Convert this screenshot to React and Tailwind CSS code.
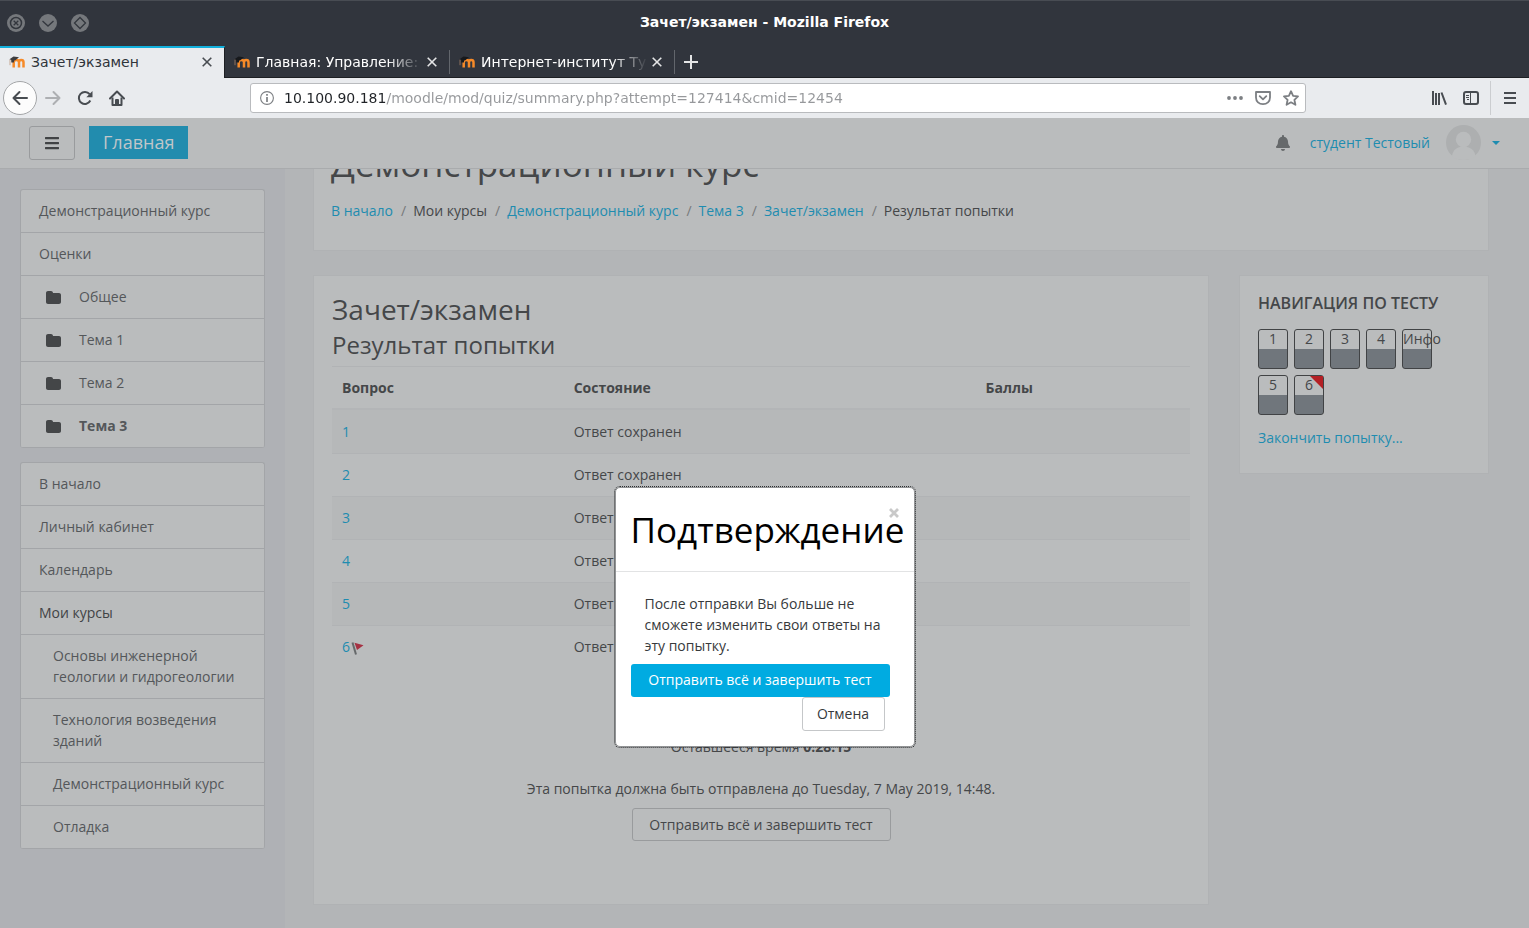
import React from "react";
import { FaBars, FaBell } from "react-icons/fa";

const courseLinks = [
  { label: "Демонстрационный курс" },
  { label: "Оценки" },
  { label: "Общее", folder: true },
  { label: "Тема 1", folder: true },
  { label: "Тема 2", folder: true },
  { label: "Тема 3", folder: true, active: true },
];

const siteLinks = [
  { label: "В начало" },
  { label: "Личный кабинет" },
  { label: "Календарь" },
  { label: "Мои курсы", plain: true },
  { label: "Основы инженерной геологии и гидрогеологии", nested: true },
  { label: "Технология возведения зданий", nested: true },
  { label: "Демонстрационный курс", nested: true },
  { label: "Отладка", nested: true },
];

const crumbs = [
  { label: "В начало", link: true },
  { label: "Мои курсы" },
  { label: "Демонстрационный курс", link: true },
  { label: "Тема 3", link: true },
  { label: "Зачет/экзамен", link: true },
  { label: "Результат попытки" },
];

const questions = [1, 2, 3, 4, 5, 6];
const quizNav = ["1", "2", "3", "4", "Инфо", "5", "6"];

function MoodleIcon({ dark }) {
  return (
    <svg width="16" height="16" viewBox="0 0 16 16" className="shrink-0">
      <path
        d="M4.700 13.500V6M10 13.500V8.200c0-1.500.7-2.200 2.200-2.200s2.300.7 2.300 2.200v5.300M4.700 8.200C4.700 6.700 5.800 6 7.300 6S10 6.700 10 8.200"
        fill="none"
        stroke="#f68a28"
        strokeWidth="2.500"
      />
      <path d="M0.500 5.300 4.500 2.600l5.500.6-3.600 3.100-1.200.3-.3 1.900H2.300l-.1-2.500z" fill={dark ? "#17191c" : "#3d3d3f"} />
      <path d="M1 5.600v5.600" fill="none" stroke="#b98a6a" strokeWidth="0.700" />
    </svg>
  );
}

function CloseIcon() {
  return (
    <svg width="10" height="10" viewBox="0 0 10 10" fill="none" stroke="currentColor" strokeWidth="1.600">
      <path d="M0.700 0.700l8.600 8.600M9.300 0.700L0.700 9.300" />
    </svg>
  );
}

function WindowButton({ label, children }) {
  return (
    <button aria-label={label} className="size-[18px]">
      <svg width="18" height="18" viewBox="0 0 18 18" fill="none" stroke="#33373e" strokeWidth="1.300">
        <circle cx="9" cy="9" r="9" fill="#75787c" stroke="none" />
        {children}
      </svg>
    </button>
  );
}

function TitleBar() {
  return (
    <div className="grid h-[46px] shrink-0 grid-cols-[1fr_auto_1fr] items-center border-t border-[#484c53] bg-[#31353d] px-[7px] pb-[2px]">
      <div className="flex gap-[14px]">
        <WindowButton label="Закрыть окно">
          <circle cx="9" cy="9" r="5.500" strokeWidth="1.500" />
          <path d="M6.700 6.700l4.600 4.600M11.300 6.700l-4.600 4.600" />
        </WindowButton>
        <WindowButton label="Свернуть окно">
          <path d="M3.500 7l5.500 5 5.500-5" />
        </WindowButton>
        <WindowButton label="Развернуть окно">
          <path d="M9 3.500l5.500 5.500L9 14.500 3.500 9z" />
        </WindowButton>
      </div>
      <h1 className="text-[14px] font-bold text-white">Зачет/экзамен - Mozilla Firefox</h1>
    </div>
  );
}

function Tab({ title, active }) {
  if (active) {
    return (
      <div className="flex w-[225px] items-center border-t-2 border-r border-t-[#12b0dd] border-r-[#1d1f23] bg-[#e9ebee] pr-3 pb-[2px] pl-[9px] text-[#2f343a]">
        <MoodleIcon />
        <span className="ml-[6px] flex-1 overflow-hidden whitespace-nowrap">{title}</span>
        <button aria-label="Закрыть вкладку" className="text-[#484c51]">
          <CloseIcon />
        </button>
      </div>
    );
  }
  return (
    <div className="flex w-[225px] items-center border-b border-[#1d1f23] pt-px pl-[9px] text-white">
      <MoodleIcon dark />
      <span className="mr-1 ml-[6px] flex-1 whitespace-nowrap [mask-image:linear-gradient(to_left,transparent,black_36px)]">
        {title}
      </span>
      <button aria-label="Закрыть вкладку" className="text-[#e4e5e6]">
        <CloseIcon />
      </button>
      <span className="ml-3 h-6 w-px bg-[#62666c]" />
    </div>
  );
}

function TabBar() {
  return (
    <div className="flex h-8 shrink-0 bg-[#31353d] text-[14px]">
      <Tab title="Зачет/экзамен" active />
      <Tab title="Главная: Управление:" />
      <Tab title="Интернет-институт Ту" />
      <div className="flex flex-1 items-center border-b border-[#1d1f23] pl-[9px]">
        <button aria-label="Новая вкладка" className="text-[#e4e5e6]">
          <svg width="14" height="14" viewBox="0 0 14 14" fill="none" stroke="currentColor" strokeWidth="2">
            <path d="M7 0v14M0 7h14" />
          </svg>
        </button>
      </div>
    </div>
  );
}

function Toolbar() {
  return (
    <div className="flex h-10 shrink-0 items-center bg-[#e9ebee] pr-3 pl-[3px] text-[#484c51]">
      <button
        aria-label="Назад"
        className="flex size-[34px] items-center justify-center rounded-full border border-[#a4a6a8] bg-[#fcfcfc]"
      >
        <svg width="16" height="16" viewBox="0 0 16 16" fill="none" stroke="currentColor" strokeWidth="2" strokeLinecap="round" strokeLinejoin="round">
          <path d="M15 8H1.500M7.500 2l-6 6 6 6" />
        </svg>
      </button>
      <button aria-label="Вперёд" className="ml-2 text-[#adafb2]">
        <svg width="16" height="16" viewBox="0 0 16 16" fill="none" stroke="currentColor" strokeWidth="2" strokeLinecap="round" strokeLinejoin="round">
          <path d="M1 8h13.500M8.500 2l6 6-6 6" />
        </svg>
      </button>
      <button aria-label="Обновить" className="ml-4">
        <svg width="16" height="16" viewBox="0 0 16 16" fill="none" stroke="currentColor" strokeWidth="2">
          <path d="M13.300 10.500A6 6 0 1 1 12.600 4.200" />
          <path d="M15.500 1v6.200H9.300z" fill="currentColor" stroke="none" />
        </svg>
      </button>
      <button aria-label="Домой" className="ml-4">
        <svg width="16" height="16" viewBox="0 0 16 16" fill="none" stroke="currentColor" strokeWidth="2" strokeLinejoin="round">
          <path d="M1 8.500L8 1.500l7 7" strokeLinecap="round" />
          <path d="M3.500 7.500V15h9V7.500" />
          <path d="M7 14.500V10h2v4.500z" />
        </svg>
      </button>

      <div className="mr-[125px] ml-[125px] flex h-[30px] flex-1 items-center rounded-[3px] border border-[#b9bbbe] bg-white pr-[6px] pl-[9px] text-[#7c7f83]">
        <svg width="14" height="14" viewBox="0 0 14 14" fill="none" stroke="currentColor" className="shrink-0">
          <circle cx="7" cy="7" r="6.400" strokeWidth="1.100" />
          <path d="M7 6v5M7 3v1.700" strokeWidth="1.700" />
        </svg>
        <input
          aria-label="Адрес"
          type="text"
          defaultValue="10.100.90.181/moodle/mod/quiz/summary.php?attempt=127414&cmid=12454"
          className="ml-[10px] min-w-0 flex-1 bg-linear-to-r from-[#202327] from-[102px] to-[#96989b] to-[102px] bg-clip-text text-[14px] text-transparent outline-none"
        />
        <button aria-label="Действия на странице">
          <svg width="16" height="16" viewBox="0 0 16 16" fill="currentColor">
            <circle cx="2" cy="8" r="1.900" />
            <circle cx="8" cy="8" r="1.900" />
            <circle cx="14" cy="8" r="1.900" />
          </svg>
        </button>
        <button aria-label="Сохранить в Pocket" className="ml-3">
          <svg width="16" height="16" viewBox="0 0 16 16" fill="none" stroke="currentColor" strokeWidth="1.800" strokeLinejoin="round">
            <path d="M1 2h14v5.500c0 4-3 6.700-7 6.700S1 11.500 1 7.500z" />
            <path d="M4.700 6.200L8 9.400l3.300-3.200" strokeLinecap="round" />
          </svg>
        </button>
        <button aria-label="Добавить в закладки" className="ml-3">
          <svg width="16" height="16" viewBox="0 0 16 16" fill="none" stroke="currentColor" strokeWidth="1.800" strokeLinejoin="round">
            <path d="M8 1.200l2.100 4.600 4.900.6-3.600 3.400 1 5L8 12.300l-4.400 2.500 1-5L1 6.400l4.900-.6z" />
          </svg>
        </button>
      </div>

      <button aria-label="Библиотека">
        <svg width="16" height="16" viewBox="0 0 16 16" fill="none" stroke="currentColor" strokeWidth="2">
          <path d="M2 1v14M5 3v12M8 3v12M10.500 2.500L15 14.700" />
        </svg>
      </button>
      <button aria-label="Боковая панель" className="ml-4">
        <svg width="16" height="16" viewBox="0 0 16 16" fill="none" stroke="currentColor" strokeWidth="2">
          <rect x="1" y="2" width="14" height="12" rx="2" />
          <path d="M7.500 2v12M3 5.500h3M3 7.500h3M4 9.500h2" strokeWidth="1" />
        </svg>
      </button>
      <span className="ml-[11px] h-[34px] w-px bg-[#cbcdd0]" />
      <button aria-label="Меню" className="ml-3">
        <svg width="14" height="14" viewBox="0 0 14 14" fill="none" stroke="currentColor" strokeWidth="2">
          <path d="M1 2h12M1 7h12M1 12h12" />
        </svg>
      </button>
    </div>
  );
}

function Navbar() {
  return (
    <header className="flex h-[51px] shrink-0 items-center border-b border-[#a9abad] bg-[#babcbd] pr-[29px] pb-px pl-[29px]">
      <button
        aria-label="Боковое меню"
        className="flex h-[34px] w-[46px] items-center justify-center rounded-[3px] border border-[#999b9d] text-[#414345]"
      >
        <FaBars size={16} />
      </button>
      <a href="#" className="ml-[14px] bg-[#228cae] px-[14px] text-[18px] leading-[33px] text-[#c0c6c9]">
        Главная
      </a>
      <button aria-label="Уведомления" className="ml-auto text-[#66696b]">
        <FaBell size={16} />
      </button>
      <a href="#" className="ml-[19px] flex items-center text-[#1e8cb0]">
        студент Тестовый
        <svg width="35" height="35" viewBox="0 0 35 35" className="ml-4">
          <circle cx="17.500" cy="17.500" r="17.500" fill="#adafb0" />
          <path d="M6 31c1-6 5-9.500 11.500-9.500S28.500 25 29.500 31c-3 3-7 4-12 4s-9-1-11.500-4z" fill="#babcbd" />
          <circle cx="17.500" cy="14.500" r="7.700" fill="#babcbd" />
        </svg>
        <svg width="8" height="4" viewBox="0 0 8 4" className="ml-[11px]">
          <path d="M0 0h8L4 4z" fill="#1e8cb0" />
        </svg>
      </a>
    </header>
  );
}

function LinkList({ items }) {
  return (
    <ul className="overflow-hidden rounded-[3px] border border-b-0 border-[#a3a5a8] bg-[#babcbd]">
      {items.map((item) => {
        let style = "flex border-b border-[#a3a5a8] pt-[10px] pr-[18px] pb-[11px] text-[#54575a]";
        style += item.nested ? " pl-8" : " pl-[18px]";
        if (item.active) style += " font-bold";
        if (item.plain) return <li key={item.label} className={style}><span className="text-[#414345]">{item.label}</span></li>;
        return (
          <li key={item.label}>
            <a href="#" className={style}>
              {item.folder && (
                <span className="flex w-10 items-center pt-[2px] pl-[7px]">
                  <svg width="15" height="13" viewBox="0 0 15 13" fill="#444648">
                    <path d="M0 2C0 .9.900 0 2 0h3c1.100 0 2 .9 2 2h6c1.100 0 2 .9 2 2v7c0 1.100-.9 2-2 2H2c-1.100 0-2-.9-2-2z" />
                  </svg>
                </span>
              )}
              {item.label}
            </a>
          </li>
        );
      })}
    </ul>
  );
}

function Breadcrumb() {
  return (
    <nav className="mt-[17px] flex">
      {crumbs.map((crumb, i) => (
        <span key={crumb.label} className="flex">
          {i > 0 && <span className="pr-[7px] pl-2 text-[#77797b]">/</span>}
          {crumb.link ? <a href="#" className="text-[#1e8cb0]">{crumb.label}</a> : <span>{crumb.label}</span>}
        </span>
      ))}
    </nav>
  );
}

function FlagIcon() {
  return (
    <svg width="13" height="14" viewBox="0 0 13 14" className="ml-px inline-block">
      <path d="M1.500 1.500l3.500 12" stroke="#66696b" strokeWidth="2" />
      <path d="M3.500 1.700l9 2.500L6 9z" fill="#a63143" />
    </svg>
  );
}

function Summary() {
  return (
    <section className="flex-1 self-start border border-[#b0b2b4] bg-[#babcbd] p-[18px] pb-[63px]">
      <h2 className="text-[28px] leading-[31px]">Зачет/экзамен</h2>
      <h3 className="mt-[5px] mb-[6px] text-[24px] leading-[30px]">Результат попытки</h3>
      <table className="w-full table-fixed border-separate border-spacing-0 text-left">
        <colgroup>
          <col className="w-[27%]" />
          <col className="w-[48%]" />
          <col />
        </colgroup>
        <thead>
          <tr>
            {["Вопрос", "Состояние", "Баллы"].map((name) => (
              <th key={name} className="h-11 border-t border-b-2 border-t-[#b1b3b5] border-b-[#b3b5b7] px-[10px]">
                {name}
              </th>
            ))}
          </tr>
        </thead>
        <tbody>
          {questions.map((n) => (
            <tr key={n} className="odd:bg-[#b6b8b9] [&+tr>td]:border-t [&+tr>td]:border-[#b1b3b5] [&+tr>td]:pb-[2px]">
              <td className="h-[43px] px-[10px]">
                <a href="#" className="text-[#1e8cb0]">{n}</a>
                {n === 6 && <FlagIcon />}
              </td>
              <td className="px-[10px]">Ответ сохранен</td>
              <td />
            </tr>
          ))}
        </tbody>
      </table>
      <div className="mt-[68px] flex flex-col items-center">
        <p>
          Оставшееся время <b>0:28:15</b>
        </p>
        <p className="mt-[21px]">Эта попытка должна быть отправлена до Tuesday, 7 May 2019, 14:48.</p>
        <button className="mt-[9px] h-[33px] w-[259px] rounded-[3px] border border-[#999b9d]">
          Отправить всё и завершить тест
        </button>
      </div>
    </section>
  );
}

function QuizNavigation() {
  return (
    <aside className="w-[250px] self-start border border-[#b0b2b4] bg-[#babcbd] px-[18px] pt-[18px] pb-[25px]">
      <h5 className="text-[16px] leading-[18px] font-semibold whitespace-nowrap uppercase">Навигация по тесту</h5>
      <div className="mt-[17px] grid grid-cols-[repeat(5,30px)] gap-[6px]">
        {quizNav.map((label) => (
          <a
            key={label}
            href="#"
            className="relative block h-10 rounded-[3px] border border-[#414345] bg-linear-to-b from-transparent from-50% to-[#70767c] to-50% text-center leading-[18px] whitespace-nowrap"
          >
            {label === "6" && (
              <svg width="13" height="13" viewBox="0 0 13 13" className="absolute top-0 right-0">
                <path d="M0 0h13v13z" fill="#b42025" />
              </svg>
            )}
            {label}
          </a>
        ))}
      </div>
      <a href="#" className="mt-3 block text-[#1e8cb0]">Закончить попытку...</a>
    </aside>
  );
}

function ConfirmDialog() {
  return (
    <div className="absolute inset-0 flex items-start justify-center pt-[369px]">
      <div
        role="dialog"
        aria-labelledby="confirm-title"
        className="relative w-[300px] rounded-[5px] border border-[#929496] bg-white outline-1 outline-[#2b2d2f] outline-dotted"
      >
        <button aria-label="Закрыть" className="absolute top-5 right-[15px] text-[#c9c9c9]">
          <svg width="10" height="10" viewBox="0 0 10 10" fill="none" stroke="currentColor" strokeWidth="2.800">
            <path d="M1 1l8 8M9 1L1 9" />
          </svg>
        </button>
        <h2 id="confirm-title" className="border-b border-[#e2e3e4] p-[15px] text-[35px] leading-[53px] whitespace-nowrap text-black">
          Подтверждение
        </h2>
        <div className="flex flex-col items-start px-[15px] pt-[21px] pb-[15px] text-[#373a3c]">
          <p className="px-[14px]">После отправки Вы больше не сможете изменить свои ответы на эту попытку.</p>
          <button className="mt-2 h-[33px] w-[259px] rounded-[3px] bg-[#00abe1] pb-[2px] whitespace-nowrap text-white">
            Отправить всё и завершить тест
          </button>
          <button className="mr-[14px] h-[34px] w-[83px] self-end rounded-[3px] border border-[#c5c7c9] pb-[2px]">Отмена</button>
        </div>
      </div>
    </div>
  );
}

export default function App() {
  return (
    <div className="flex h-screen flex-col overflow-hidden font-['DejaVu_Sans',sans-serif]">
      <TitleBar />
      <TabBar />
      <Toolbar />
      <div className="relative flex min-h-0 flex-1 flex-col bg-[#b3b5b7] font-['Open_Sans',sans-serif] text-[14px] leading-[21px] text-[#454749]">
        <Navbar />
        <div className="flex min-h-0 flex-1 overflow-hidden">
          <div className="flex w-[285px] shrink-0 flex-col gap-[14px] bg-[#afb1b5] px-5 pt-5">
            <LinkList items={courseLinks} />
            <LinkList items={siteLinks} />
          </div>
          <main className="flex-1 pr-10 pl-7">
            <div className="-mt-[43px] border border-[#b0b2b4] bg-[#babcbd] px-[17px] pt-[18px] pb-[29px]">
              <h1 className="text-[35px] leading-[38px]">Демонстрационный курс</h1>
              <Breadcrumb />
            </div>
            <div className="mt-6 flex gap-[30px]">
              <Summary />
              <QuizNavigation />
            </div>
          </main>
        </div>
        <ConfirmDialog />
      </div>
    </div>
  );
}
